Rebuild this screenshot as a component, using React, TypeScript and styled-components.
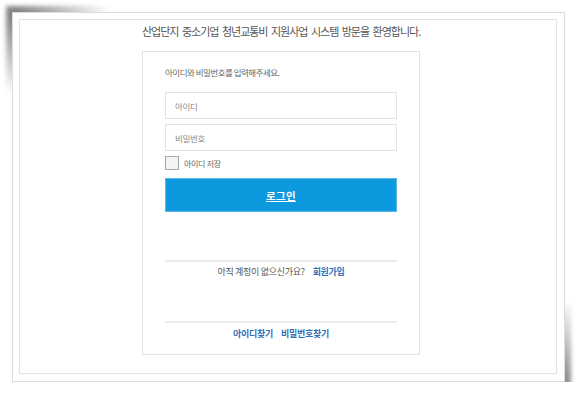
import React from 'react'
import styled, { createGlobalStyle } from 'styled-components'

const GlobalStyle = createGlobalStyle`
	html {
		background: #fff;
	}
	body {
		margin: 0;
		padding: 0;
		font-family: 'Noto Sans CJK KR', 'Noto Sans', sans-serif;
		color: #555;
	}
`

const Frame = styled.div`
	position: relative;
	box-sizing: border-box;
	width: 553px;
	height: 370px;
	margin: 12px 0 0 12px;
	padding: 6px 7px 7px 6px;
	background: #fff;
	border: 1px solid #dcdcdc;

	&::before {
		content: '';
		position: absolute;
		top: -7px;
		left: -7px;
		width: 130px;
		height: 110px;
		z-index: -1;
		background: radial-gradient(ellipse 120px 100px at 8px 8px, rgba(0, 0, 0, 0.5), transparent 80%);
		filter: blur(2px);
	}

	&::after {
		content: '';
		position: absolute;
		right: -7px;
		bottom: -7px;
		width: 150px;
		height: 110px;
		z-index: -1;
		background: radial-gradient(ellipse 140px 100px at calc(100% - 8px) calc(100% - 8px), rgba(0, 0, 0, 0.45), transparent 80%);
		filter: blur(2px);
	}
`

const Inner = styled.div`
	box-sizing: border-box;
	height: 100%;
	border: 1px solid #e3e3e3;
	padding-left: 122px;
`

const Column = styled.div`
	width: 278px;
`

const Welcome = styled.h1`
	margin: 3px 0 12px;
	font-size: 11px;
	line-height: 16px;
	font-weight: 400;
	letter-spacing: -1px;
	word-spacing: 2px;
	color: #555;
	text-align: center;
	white-space: nowrap;
`

const Card = styled.div`
	box-sizing: border-box;
	border: 1px solid #e2e2e2;
	padding: 0 22px 13px;
	display: flex;
	flex-direction: column;
`

const Prompt = styled.p`
	margin: 14px 0 0;
	font-size: 8.5px;
	line-height: 12px;
	letter-spacing: -0.5px;
	color: #666;
`

const Field = styled.input<{ $gap: number }>`
	box-sizing: border-box;
	width: 100%;
	height: 27px;
	margin-top: ${p => p.$gap}px;
	padding: 0 9px;
	border: 1px solid #e3e3e3;
	outline: none;
	font-family: inherit;
	font-size: 8.5px;
	color: #555;

	&::placeholder {
		color: #888;
		letter-spacing: -0.3px;
	}
`

const SaveRow = styled.label`
	margin-top: 5px;
	height: 14px;
	display: flex;
	align-items: center;
	gap: 5px;
	font-size: 8px;
	color: #666;
	letter-spacing: -0.3px;
`

const Check = styled.span`
	box-sizing: border-box;
	width: 14px;
	height: 14px;
	border: 1px solid #a8a8a8;
	background: #f3f3f3;
`

const LoginButton = styled.button`
	margin-top: 8px;
	height: 34px;
	border: 1px solid #5ab8ea;
	background: #0d99dd;
	color: #fff;
	font-family: inherit;
	font-size: 10.5px;
	font-weight: 700;
	letter-spacing: 0.3px;
	text-decoration: underline;
	text-underline-offset: 1px;
	cursor: pointer;
`

const Divider = styled.hr<{ $gap: number }>`
	margin: ${p => p.$gap}px 0 0;
	border: 0;
	height: 2px;
	background: #ebebeb;
`

const TextRow = styled.div<{ $gap: number }>`
	margin-top: ${p => p.$gap}px;
	display: flex;
	justify-content: center;
	gap: 8px;
	font-size: 9px;
	line-height: 14px;
	letter-spacing: -0.3px;
	color: #555;
`

const Link = styled.a`
	color: #2f6fb8;
	font-weight: 700;
	text-decoration: none;
	cursor: pointer;
`

const App = () => {
	return (
		<>
			<GlobalStyle />
			<Frame>
				<Inner>
					<Column>
						<Welcome>산업단지 중소기업 청년교통비 지원사업 시스템 방문을 환영합니다.</Welcome>
						<Card>
							<Prompt>아이디와 비밀번호를 입력해주세요.</Prompt>
							<Field $gap={14} type="text" placeholder="아이디" />
							<Field $gap={5} type="password" placeholder="비밀번호" />
							<SaveRow>
								<Check />
								아이디 저장
							</SaveRow>
							<LoginButton>로그인</LoginButton>

							<Divider $gap={48} />
							<TextRow $gap={3}>
								<span>아직 계정이 없으신가요?</span>
								<Link>회원가입</Link>
							</TextRow>

							<Divider $gap={42} />
							<TextRow $gap={4}>
								<Link>아이디찾기</Link>
								<Link>비밀번호찾기</Link>
							</TextRow>
						</Card>
					</Column>
				</Inner>
			</Frame>
		</>
	)
}

export default App
